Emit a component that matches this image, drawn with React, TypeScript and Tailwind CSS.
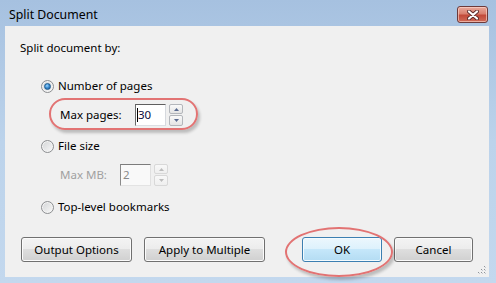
import type { ReactNode } from "react";

const font = "font-['Noto_Sans','Liberation_Sans',sans-serif]";

function Radio({ checked }: { checked?: boolean }) {
  return (
    <span className="relative flex h-[13px] w-[13px] items-center justify-center rounded-full border border-[#8c8e91] bg-linear-to-br from-[#d2d4d6] to-[#f9f9f9] shadow-[inset_0_0_0_1px_#f4f4f4]">
      {checked && (
        <span className="h-[7px] w-[7px] rounded-full border border-[#1b5a90] bg-[radial-gradient(circle_at_40%_35%,#9fd6ff_0%,#3d8fd3_45%,#1b4f86_100%)]" />
      )}
    </span>
  );
}

function Spinner({ disabled }: { disabled?: boolean }) {
  const part = disabled
    ? "border-[#d8d8d8] bg-linear-to-b from-[#f8f8f8] to-[#efefef]"
    : "border-[#b3b6bb] bg-linear-to-b from-[#fafafa] to-[#e4e4e4]";
  const arrow = disabled ? "#bcbcbc" : "#5a6b90";
  return (
    <div className="ml-[3px] flex h-[22px] w-[14px] flex-col gap-px">
      <div className={`flex h-[10px] items-center justify-center rounded-[2px] border ${part}`}>
        <svg width="5" height="3" viewBox="0 0 5 3">
          <path d="M0 3 L2.5 0 L5 3 Z" fill={arrow} />
        </svg>
      </div>
      <div className={`flex h-[11px] items-center justify-center rounded-[2px] border ${part}`}>
        <svg width="5" height="3" viewBox="0 0 5 3">
          <path d="M0 0 L2.5 3 L5 0 Z" fill={arrow} />
        </svg>
      </div>
    </div>
  );
}

function Button({ children, className, primary }: { children: ReactNode; className: string; primary?: boolean }) {
  return (
    <button
      className={`h-[25px] rounded-[3px] border text-[11.5px] text-black ${className} ${
        primary
          ? "border-[#3c7fb1] bg-[linear-gradient(to_bottom,#ecf7fd_0%,#dcf1fc_50%,#c5e7fa_50%,#b4dcf3_100%)] shadow-[inset_0_0_0_1px_#f4fbfe]"
          : "border-[#707070] bg-[linear-gradient(to_bottom,#f3f3f3_0%,#ececec_50%,#dedede_50%,#d0d0d0_100%)] shadow-[inset_0_0_0_1px_#fbfbfb]"
      }`}
    >
      {children}
    </button>
  );
}

export default function App() {
  return (
    <div className={`flex h-[283px] w-[496px] flex-col bg-linear-to-b from-[#a6c1e0] via-[#bcd3eb] to-[#c3d8ee] ${font}`}>
      {/* title bar */}
      <div className="flex h-[26px] items-start justify-between pl-[9px] pr-[8px]">
        <span className="mt-[6px] text-[12.3px] leading-[17px] text-black">Split Document</span>
        <div className="mt-[6px] flex h-[17px] w-[31px] items-center justify-center rounded-[3px] border border-[#6d3a3a] bg-[linear-gradient(to_bottom,#e9a99c_0%,#d9806f_45%,#c24a3a_55%,#cf6b58_100%)] shadow-[inset_0_0_0_1px_rgba(255,220,210,0.6)]">
          <svg width="12" height="10" viewBox="0 0 12 10">
            <path d="M2 1.5 L10 8.5 M10 1.5 L2 8.5" stroke="#5a2a2a" strokeWidth="4" strokeLinecap="round" />
            <path d="M2 1.5 L10 8.5 M10 1.5 L2 8.5" stroke="#ffffff" strokeWidth="2.2" strokeLinecap="round" />
          </svg>
        </div>
      </div>

      {/* client area */}
      <div className="relative ml-[5px] mr-[7px] flex h-[251px] flex-col bg-[#f0f0f0] pl-[15px] pt-[14px] text-[11.5px] leading-[16px] text-black">
        <div className="h-4">Split document by:</div>

        <div className="mt-[22px] flex h-4 items-center pl-[21px]">
          <Radio checked />
          <span className="ml-[4px]">Number of pages</span>
        </div>

        <div className="relative mt-[10px] flex h-[22px] items-center pl-[40px]">
          <span className="pointer-events-none absolute left-[29px] top-[-6px] h-[32px] w-[149px] rounded-full border-2 border-[#e27373] shadow-[2px_3px_3px_rgba(0,0,0,0.22)]" />
          <span className="w-[75px]">Max pages:</span>
          <div className="flex h-[22px] w-[31px] items-center border border-b-[#dcdfe4] border-l-[#6b6b6b] border-r-[#d6d9de] border-t-[#5f5f5f] bg-white pl-[1px] text-[#0b0b3c]">
            <span className="h-[14px] w-px bg-black" />
            30
          </div>
          <Spinner />
        </div>

        <div className="mt-[12px] flex h-4 items-center pl-[21px]">
          <Radio />
          <span className="ml-[4px]">File size</span>
        </div>

        <div className="mt-[10px] flex h-[22px] items-center pl-[40px] text-[#a0a0a0]">
          <span className="w-[60px]">Max MB:</span>
          <div className="flex h-[22px] w-[31px] items-center border border-b-[#e3e3e3] border-l-[#8a8a8a] border-r-[#e0e0e0] border-t-[#7c7c7c] bg-[#f9f9f9] pl-[2px] text-[#8a8a8a]">
            2
          </div>
          <Spinner disabled />
        </div>

        <div className="mt-[13px] flex h-4 items-center pl-[21px]">
          <Radio />
          <span className="ml-[4px]">Top-level bookmarks</span>
        </div>

        <div className="mt-[22px] flex items-center pl-px pr-[16px]">
          <Button className="w-[111px]">Output Options</Button>
          <Button className="ml-[12px] w-[121px]">Apply to Multiple</Button>
          <div className="relative ml-auto">
            <span className="pointer-events-none absolute left-[-17px] top-[-10px] h-[50px] w-[108px] rounded-[50%] border-2 border-[#e27373] shadow-[2px_3px_3px_rgba(0,0,0,0.22)]" />
            <Button primary className="w-[80px]">OK</Button>
          </div>
          <Button className="ml-[12px] w-[79px]">Cancel</Button>
        </div>

        {/* size grip */}
        <svg className="absolute bottom-[2px] right-[2px]" width="10" height="10" viewBox="0 0 10 10">
          {[
            [8, 2],
            [5, 5],
            [8, 5],
            [2, 8],
            [5, 8],
            [8, 8],
          ].map(([x, y]) => (
            <g key={`${x}-${y}`}>
              <rect x={x} y={y} width="1" height="1" fill="#c7cbd1" />
              <rect x={x - 1} y={y - 1} width="1" height="1" fill="#8f9499" />
            </g>
          ))}
        </svg>
      </div>
    </div>
  );
}
